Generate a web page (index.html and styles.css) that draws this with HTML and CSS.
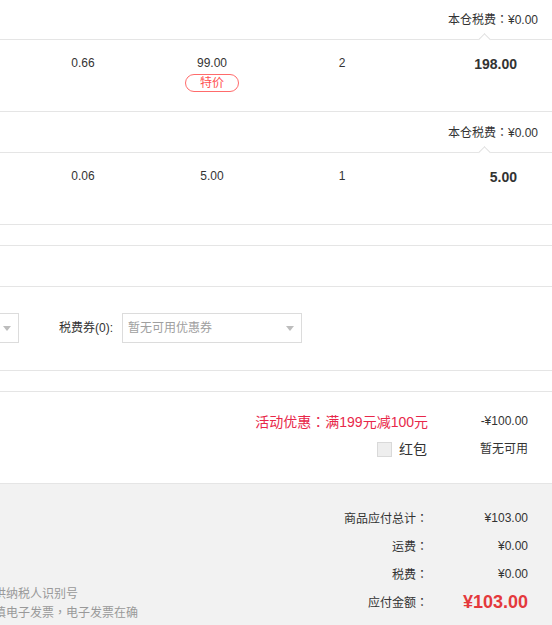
FILE: index.html
```html
<!DOCTYPE html>
<html lang="zh-CN">
<head>
<meta charset="utf-8">
<title>订单结算</title>
<link rel="stylesheet" href="styles.css">
</head>
<body>
<div class="page">
  <section class="tax"><span>本仓税费<span class="punct">：</span>¥0.00</span></section>
  <section class="item">
    <div class="col col-rate">0.66</div>
    <div class="col col-price"><span>99.00</span><span class="badge">特价</span></div>
    <div class="col col-qty">2</div>
    <div class="col col-total">198.00</div>
  </section>

  <section class="tax"><span>本仓税费<span class="punct">：</span>¥0.00</span></section>
  <section class="item">
    <div class="col col-rate">0.06</div>
    <div class="col col-price"><span>5.00</span></div>
    <div class="col col-qty">1</div>
    <div class="col col-total">5.00</div>
  </section>

  <section class="spacer spacer-s"></section>
  <section class="spacer spacer-l"></section>

  <section class="coupons">
    <div class="select select-cut"><span class="select-text">暂无可用优惠券</span><span class="arrow"></span></div>
    <label class="coupon-label">税费券(0):</label>
    <div class="select"><span class="select-text">暂无可用优惠券</span><span class="arrow"></span></div>
  </section>

  <section class="spacer spacer-s"></section>

  <section class="discounts">
    <div class="sum-row">
      <span class="sum-label promo">活动优惠<span class="punct">：</span>满199元减100元</span>
      <span class="sum-value">-¥100.00</span>
    </div>
    <div class="sum-row">
      <span class="sum-label redpack"><span class="checkbox"></span><span class="redpack-text">红包</span></span>
      <span class="sum-value">暂无可用</span>
    </div>
  </section>

  <section class="totals">
    <div class="note">
      <div>供纳税人识别号</div>
      <div>填电子发票<span class="punct">，</span>电子发票在确</div>
    </div>
    <div class="sum-list">
      <div class="sum-row"><span class="sum-label">商品应付总计<span class="punct">：</span></span><span class="sum-value">¥103.00</span></div>
      <div class="sum-row"><span class="sum-label">运费<span class="punct">：</span></span><span class="sum-value">¥0.00</span></div>
      <div class="sum-row"><span class="sum-label">税费<span class="punct">：</span></span><span class="sum-value">¥0.00</span></div>
      <div class="sum-row"><span class="sum-label">应付金额<span class="punct">：</span></span><span class="sum-value grand">¥103.00</span></div>
    </div>
  </section>
</div>
</body>
</html>
```

FILE: styles.css
```css
* { box-sizing: border-box; }

html, body {
  margin: 0;
  padding: 0;
  background: #fff;
}

body {
  width: 552px;
  height: 625px;
  overflow: hidden;
  font-family: "Liberation Sans", "Noto Sans CJK SC", sans-serif;
  font-size: 12px;
  color: #333;
}

/* full-width punctuation centred in its box, as in the reference */
.punct {
  font-family: "Noto Sans CJK TC", "Noto Sans CJK SC", sans-serif;
  font-feature-settings: "locl" 0;
}

.page {
  margin-top: -1px;
}

/* warehouse tax line */
.tax {
  position: relative;
  height: 41px;
  border-bottom: 1px solid #e5e5e5;
  display: flex;
  justify-content: flex-end;
  align-items: center;
  padding-right: 14px;
  line-height: 16px;
}

.tax::after {
  content: "";
  position: absolute;
  left: 480px;
  top: 36px;
  width: 8px;
  height: 8px;
  background: #fff;
  border-top: 1px solid #e0e0e0;
  border-left: 1px solid #e0e0e0;
  transform: rotate(45deg);
}

/* item row */
.item {
  height: 72px;
  border-bottom: 1px solid #e5e5e5;
  display: flex;
  align-items: flex-start;
  padding-top: 15px;
  line-height: 16px;
}

.col { text-align: center; }
.col-rate { width: 166px; }
.col-price {
  width: 92px;
  display: flex;
  flex-direction: column;
  align-items: center;
}
.col-qty { width: 168px; }
.col-total {
  flex: 1;
  text-align: right;
  padding-right: 35px;
  font-size: 14px;
  font-weight: bold;
  padding-top: 1px;
}

.badge {
  margin-top: 3px;
  width: 54px;
  height: 18px;
  border: 1px solid #ff6b6b;
  border-radius: 9px;
  color: #ff5050;
  font-size: 12px;
  line-height: 16px;
  text-align: center;
}

/* empty bands */
.spacer { border-bottom: 1px solid #e5e5e5; }
.spacer-s { height: 21px; }
.spacer-l { height: 41px; }

/* coupon selects */
.coupons {
  height: 84px;
  border-bottom: 1px solid #e5e5e5;
  display: flex;
  align-items: center;
  padding-bottom: 1px;
}

.select {
  width: 180px;
  height: 30px;
  border: 1px solid #dcdcdc;
  display: flex;
  align-items: center;
  padding: 0 7px 0 5px;
  color: #a0a0a0;
}

.select-cut { margin-left: -161px; }

.select-text { flex: 1; line-height: 16px; }

.arrow {
  width: 0;
  height: 0;
  border-left: 4px solid transparent;
  border-right: 4px solid transparent;
  border-top: 5px solid #bdbdbd;
}

.coupon-label {
  margin-left: 40px;
  margin-right: 9px;
  line-height: 16px;
}

/* summaries */
.sum-row {
  display: grid;
  grid-template-columns: 1fr 100px;
  height: 28px;
  align-items: center;
  line-height: 16px;
}

.sum-label { text-align: right; }
.sum-value { text-align: right; }

.discounts {
  height: 91px;
  padding-top: 15px;
  padding-right: 24px;
}

.promo {
  color: #e8284a;
  font-size: 14px;
}

.redpack {
  display: flex;
  justify-content: flex-end;
  align-items: center;
}

.checkbox {
  width: 15px;
  height: 15px;
  background: #eeeeee;
  border: 1px solid #d9d9d9;
  margin-right: 7px;
}

.redpack-text {
  font-size: 14px;
  color: #333;
  margin-right: 1px;
}

.totals {
  height: 150px;
  background: #f2f2f2;
  border-top: 1px solid #e5e5e5;
  display: flex;
  align-items: flex-start;
  padding-top: 20px;
}

.note {
  flex: 1;
  margin-left: -6px;
  margin-top: 81px;
  color: #999;
  line-height: 18px;
}

.sum-list {
  width: 250px;
  padding-right: 24px;
}

.grand {
  color: #e4393c;
  font-size: 18px;
  font-weight: bold;
}
```
